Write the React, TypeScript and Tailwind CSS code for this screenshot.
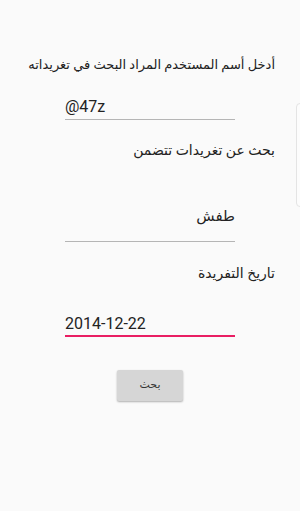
export default function App() {
  return (
    <div
      className="relative h-[511px] w-[300px] overflow-hidden bg-[#fafafa] text-[#222]"
      style={{ fontFamily: 'Roboto, "DejaVu Sans", sans-serif' }}
    >
      <div className="flex flex-col pt-[55px]">
        <p dir="rtl" className="pr-[25px] text-[13px] leading-[20px] text-[#222]">
          أدخل أسم المستخدم المراد البحث في تغريداته
        </p>

        <div className="mt-[23px] ml-[65px] w-[170px] border-b border-[#b5b5b5] pb-[3px]">
          <span className="block text-[16px] leading-[18px] text-[#222]">@47z</span>
        </div>

        <p dir="rtl" className="mt-[20px] pr-[25px] text-[14px] leading-[20px]">
          بحث عن تغريدات تتضمن
        </p>

        <div className="mt-[46px] ml-[65px] flex w-[170px] justify-end border-b border-[#b5b5b5] pb-[15px]">
          <span dir="rtl" className="text-[15px] leading-[20px]">طفش</span>
        </div>

        <p dir="rtl" className="mt-[21px] pr-[25px] text-[14px] leading-[20px]">
          تاريخ التفريدة
        </p>

        <div className="mt-[31px] ml-[65px] w-[170px] border-b-2 border-[#e91e63] pb-[1px]">
          <span className="block text-[16px] leading-[20px] text-[#222]">2014-12-22</span>
        </div>

        <div className="mt-[33px] flex justify-center">
          <button
            type="button"
            className="h-[31px] w-[66px] rounded-[2px] bg-[#d6d6d6] text-[11px] text-[#333] shadow-[0_1px_2px_rgba(0,0,0,0.3)]"
          >
            بحث
          </button>
        </div>
      </div>

      <div className="absolute right-[-4px] top-[103px] h-[104px] w-[8px] rounded-[4px] border border-[#e4e4e4] bg-[#fcfcfc]" />
    </div>
  );
}
